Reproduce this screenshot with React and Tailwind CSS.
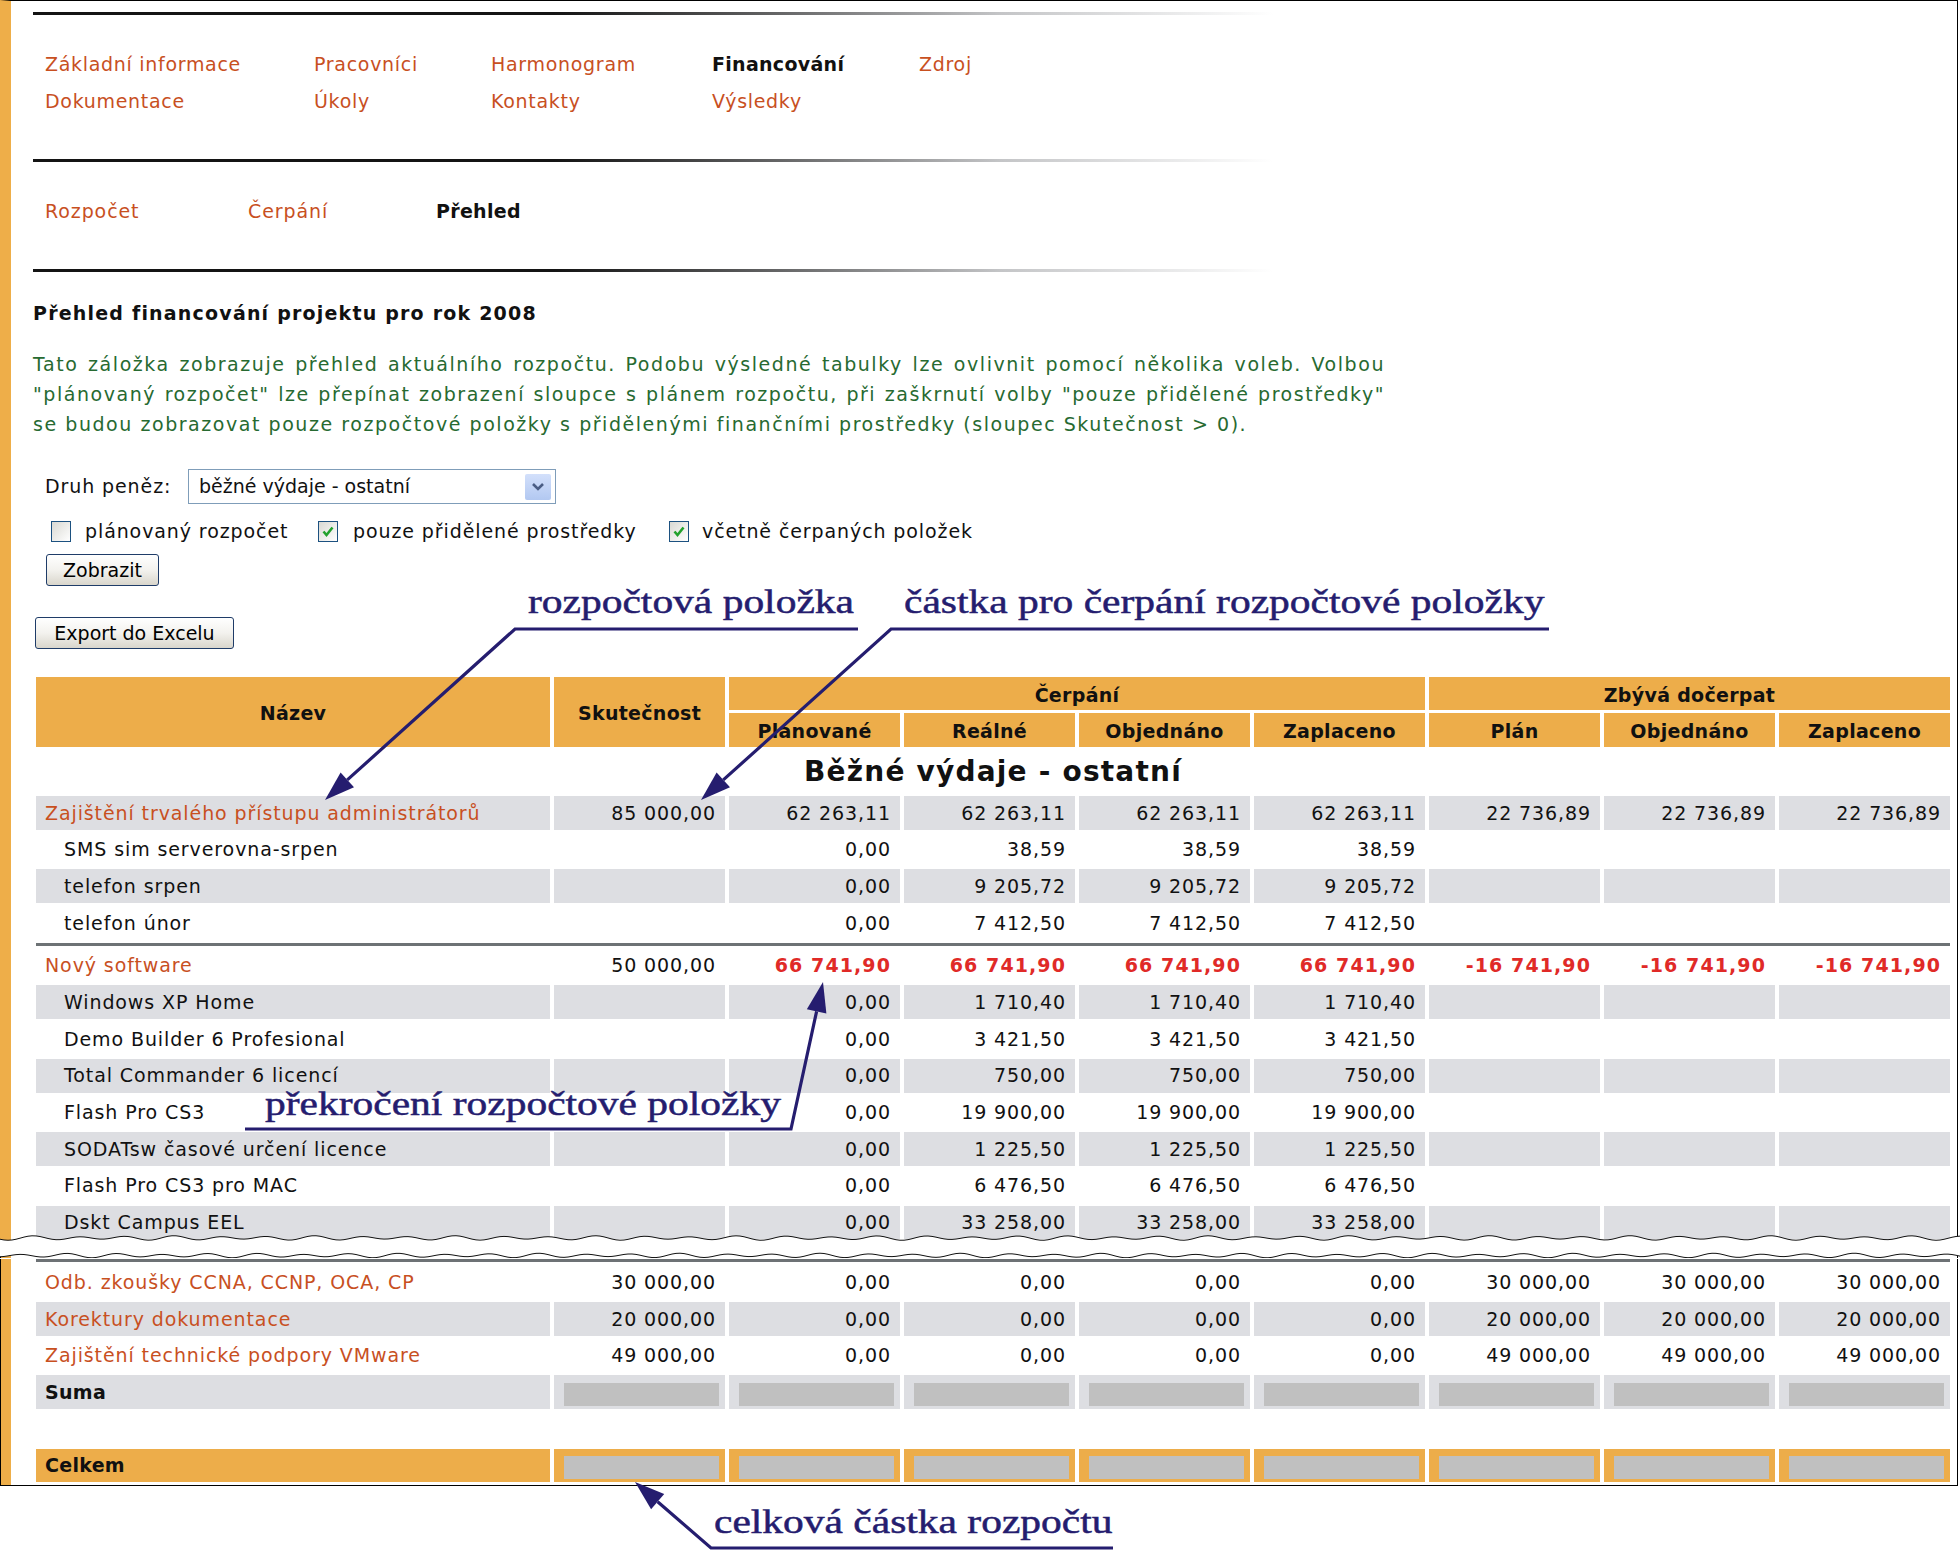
import React from 'react';

const LINK = 'text-[#c8501f]';
const GRAY = 'bg-[#dddee2]';
const ORANGE = 'bg-[#edad4a]';

const NAV = [
  ['Základní informace', 'Pracovníci', 'Harmonogram', 'Financování', 'Zdroj'],
  ['Dokumentace', 'Úkoly', 'Kontakty', 'Výsledky'],
];

const TOP_ROWS = [
  { name: 'Zajištění trvalého přístupu administrátorů', parent: true, gray: true, vals: ['85 000,00', '62 263,11', '62 263,11', '62 263,11', '62 263,11', '22 736,89', '22 736,89', '22 736,89'] },
  { name: 'SMS sim serverovna-srpen', vals: ['', '0,00', '38,59', '38,59', '38,59', '', '', ''] },
  { name: 'telefon srpen', gray: true, vals: ['', '0,00', '9 205,72', '9 205,72', '9 205,72', '', '', ''] },
  { name: 'telefon únor', vals: ['', '0,00', '7 412,50', '7 412,50', '7 412,50', '', '', ''] },
  { sep: true },
  { name: 'Nový software', parent: true, over: true, vals: ['50 000,00', '66 741,90', '66 741,90', '66 741,90', '66 741,90', '-16 741,90', '-16 741,90', '-16 741,90'] },
  { name: 'Windows XP Home', gray: true, vals: ['', '0,00', '1 710,40', '1 710,40', '1 710,40', '', '', ''] },
  { name: 'Demo Builder 6 Profesional', vals: ['', '0,00', '3 421,50', '3 421,50', '3 421,50', '', '', ''] },
  { name: 'Total Commander 6 licencí', gray: true, vals: ['', '0,00', '750,00', '750,00', '750,00', '', '', ''] },
  { name: 'Flash Pro CS3', vals: ['', '0,00', '19 900,00', '19 900,00', '19 900,00', '', '', ''] },
  { name: 'SODATsw časové určení licence', gray: true, vals: ['', '0,00', '1 225,50', '1 225,50', '1 225,50', '', '', ''] },
  { name: 'Flash Pro CS3 pro MAC', vals: ['', '0,00', '6 476,50', '6 476,50', '6 476,50', '', '', ''] },
  { name: 'Dskt Campus EEL', gray: true, vals: ['', '0,00', '33 258,00', '33 258,00', '33 258,00', '', '', ''] },
];

const LOW_ROWS = [
  { name: 'Odb. zkoušky CCNA, CCNP, OCA, CP', parent: true, vals: ['30 000,00', '0,00', '0,00', '0,00', '0,00', '30 000,00', '30 000,00', '30 000,00'] },
  { name: 'Korektury dokumentace', parent: true, gray: true, vals: ['20 000,00', '0,00', '0,00', '0,00', '0,00', '20 000,00', '20 000,00', '20 000,00'] },
  { name: 'Zajištění technické podpory VMware', parent: true, vals: ['49 000,00', '0,00', '0,00', '0,00', '0,00', '49 000,00', '49 000,00', '49 000,00'] },
];

function Cols() {
  return (
    <colgroup>
      <col className="w-[514px]" />
      {Array.from({ length: 8 }).map((_, i) => (
        <col key={i} className="w-[171px]" />
      ))}
    </colgroup>
  );
}

function GradLine({ className = '' }) {
  return (
    <div className={`ml-[21px] h-[3px] w-[1240px] bg-linear-to-r from-[#141414] from-42% via-[#c4c5c7] via-78% to-white ${className}`} />
  );
}

function DataRow({ row }) {
  if (row.sep) {
    return (
      <tr>
        <td colSpan={9} className="h-[3px] p-0 bg-[#6d7275]" />
      </tr>
    );
  }
  const bg = row.gray ? GRAY : '';
  return (
    <tr>
      <td className={`h-[33.7px] p-0 whitespace-nowrap ${bg} ${row.parent ? `pl-[9px] ${LINK}` : 'pl-[28px] text-[#111]'}`}>
        {row.name}
      </td>
      {row.vals.map((v, i) => (
        <td
          key={i}
          className={`h-[33.7px] p-0 pr-[9px] text-right whitespace-nowrap ${bg} ${row.over && i > 0 ? 'font-bold tracking-[1.1px] text-[#e02a27]' : 'text-[#111]'}`}
        >
          {v}
        </td>
      ))}
    </tr>
  );
}

function Check({ checked }) {
  return (
    <span className="flex h-[21px] w-[20px] shrink-0 items-center justify-center border border-[#1c5180] bg-linear-to-br from-[#d9d9d3] to-white">
      {checked && (
        <svg width="14" height="14" viewBox="0 0 14 14">
          <path d="M2.5 6.5 L5.5 10 L11.5 2.5" fill="none" stroke="#22a12c" strokeWidth="2.6" />
        </svg>
      )}
    </span>
  );
}

function XpButton({ children, className = '' }) {
  return (
    <button className={`flex h-[32px] items-center justify-center rounded-[3px] border border-[#1f3c68] bg-linear-to-b from-white via-[#f3f2ee] to-[#d9d6cc] text-[19px] tracking-normal text-black ${className}`}>
      {children}
    </button>
  );
}

function wavePoints(base, phase) {
  const pts = [];
  for (let x = 0; x <= 1960; x += 4) {
    const y = base + 1.7 * Math.sin((x / 47) * 2 * Math.PI + phase) + 0.6 * Math.sin(x / 11 + phase * 3);
    pts.push([x, y]);
  }
  return pts;
}

function Tear() {
  const up = wavePoints(3, 0.4);
  const low = wavePoints(20.5, 1.9);
  const toD = (pts) => pts.map((p, i) => `${i ? 'L' : 'M'}${p[0]} ${p[1].toFixed(2)}`).join(' ');
  const fill = toD(up) + ' ' + [...low].reverse().map((p) => `L${p[0]} ${p[1].toFixed(2)}`).join(' ') + ' Z';
  return (
    <svg className="relative z-10 -mt-[7px] block" width="1960" height="23" viewBox="0 0 1960 23">
      <rect x="1" y="16" width="10" height="7" fill="#eeae49" />
      <rect x="0" y="16" width="1" height="7" fill="#000" />
      <rect x="1957" y="16" width="1" height="7" fill="#000" />
      <path d={fill} fill="#fff" />
      <path d={toD(up)} fill="none" stroke="#111" strokeWidth="1" />
      <path d={toD(low)} fill="none" stroke="#111" strokeWidth="1" />
    </svg>
  );
}

const ARROWS = [
  { pts: [[858, 629], [515, 629]], tip: [325, 800] },
  { pts: [[1549, 629], [891, 629]], tip: [701, 800] },
  { pts: [[245, 1129], [791, 1129]], tip: [823, 982] },
  { pts: [[1113, 1548], [711, 1548]], tip: [635, 1482] },
];

function Arrows() {
  return (
    <svg className="pointer-events-none absolute left-0 top-0 z-20" width="1960" height="1551" viewBox="0 0 1960 1551">
      {ARROWS.map((a, i) => {
        const p = a.pts[a.pts.length - 1];
        const dx = a.tip[0] - p[0];
        const dy = a.tip[1] - p[1];
        const len = Math.hypot(dx, dy);
        const ux = dx / len;
        const uy = dy / len;
        const bx = a.tip[0] - ux * 30;
        const by = a.tip[1] - uy * 30;
        const nx = -uy * 10;
        const ny = ux * 10;
        const line = [...a.pts, [bx, by]].map((q) => q.join(',')).join(' ');
        return (
          <g key={i}>
            <polyline points={line} fill="none" stroke="#251d6f" strokeWidth="3.2" />
            <polygon points={`${a.tip[0]},${a.tip[1]} ${bx + nx},${by + ny} ${bx - nx},${by - ny}`} fill="#251d6f" />
          </g>
        );
      })}
    </svg>
  );
}

function Note({ className, children }) {
  return (
    <div className={`absolute z-20 origin-left scale-x-122 whitespace-nowrap font-['Liberation_Serif',serif] text-[34px] leading-[34px] tracking-normal text-[#251d6f] [-webkit-text-stroke:0.5px_#251d6f] ${className}`}>
      {children}
    </div>
  );
}

export default function App() {
  return (
    <div className="relative h-[1551px] w-[1960px] overflow-hidden bg-white font-['DejaVu_Sans',sans-serif] text-[19px] tracking-[0.9px] text-[#111]">
      {/* horní část */}
      <div className="w-[1958px] border-t border-r border-black border-l-[11px] border-l-[#eeae49]">
        <GradLine className="mt-[11px] ml-[22px]" />

        <div className="ml-[34px] mt-[31px] grid grid-cols-[269px_177px_221px_207px_120px] auto-rows-[37px] items-center">
          {NAV.flat().map((n) =>
            n === 'Financování' ? (
              <span key={n} className="font-bold tracking-[0.3px] text-[#111]">{n}</span>
            ) : (
              <span key={n} className={`tracking-[0.7px] ${LINK}`}>{n}</span>
            )
          )}
        </div>

        <GradLine className="mt-[39px] ml-[22px]" />

        <div className="ml-[34px] mt-[31px] flex h-[37px] items-center">
          <span className={`w-[203px] ${LINK}`}>Rozpočet</span>
          <span className={`w-[188px] ${LINK}`}>Čerpání</span>
          <span className="font-bold tracking-[0.3px]">Přehled</span>
        </div>

        <GradLine className="mt-[39px] ml-[22px]" />

        <h1 className="ml-[22px] mt-[26px] h-[30px] font-bold leading-[30px] tracking-[1.2px]">
          Přehled financování projektu pro rok 2008
        </h1>

        <div className="ml-[22px] mt-[21px] whitespace-nowrap leading-[30px] tracking-[1.55px] text-[#276a31]">
          <p className="w-[1352px] text-justify [text-align-last:justify]">Tato záložka zobrazuje přehled aktuálního rozpočtu. Podobu výsledné tabulky lze ovlivnit pomocí několika voleb. Volbou</p>
          <p className="w-[1352px] text-justify [text-align-last:justify]">"plánovaný rozpočet" lze přepínat zobrazení sloupce s plánem rozpočtu, při zaškrnutí volby "pouze přidělené prostředky"</p>
          <p>se budou zobrazovat pouze rozpočtové položky s přidělenými finančními prostředky (sloupec Skutečnost &gt; 0).</p>
        </div>

        <div className="ml-[34px] mt-[30px] flex h-[35px] items-center">
          <span className="w-[143px]">Druh peněz:</span>
          <div className="flex h-[35px] w-[368px] items-center justify-between border border-[#7f9db9] pl-[10px] pr-[4px] tracking-normal">
            <span>běžné výdaje - ostatní</span>
            <span className="flex h-[26px] w-[26px] items-center justify-center rounded-[2px] bg-linear-to-b from-[#d3e0fb] to-[#b2c8f1]">
              <svg width="14" height="10" viewBox="0 0 14 10">
                <path d="M2 2 L7 7 L12 2" fill="none" stroke="#4a5d84" strokeWidth="2.6" />
              </svg>
            </span>
          </div>
        </div>

        <div className="ml-[40px] mt-[11px] flex h-[33px] items-center">
          <label className="flex w-[267px] items-center gap-[14px]">
            <Check />
            <span>plánovaný rozpočet</span>
          </label>
          <label className="flex w-[351px] items-center gap-[15px]">
            <Check checked />
            <span>pouze přidělené prostředky</span>
          </label>
          <label className="flex items-center gap-[13px]">
            <Check checked />
            <span>včetně čerpaných položek</span>
          </label>
        </div>

        <XpButton className="ml-[35px] mt-[6px] w-[113px]">Zobrazit</XpButton>
        <XpButton className="ml-[24px] mt-[31px] w-[199px]">Export do Excelu</XpButton>

        <table className="ml-[21px] mt-[25px] w-[1922px] table-fixed border-separate border-spacing-x-[4px] border-spacing-y-[3px]">
          <Cols />
          <thead>
            <tr>
              <th rowSpan={2} className={`p-0 pt-[3px] font-bold tracking-[0.3px] ${ORANGE}`}>Název</th>
              <th rowSpan={2} className={`p-0 pt-[3px] font-bold tracking-[0.3px] ${ORANGE}`}>Skutečnost</th>
              <th colSpan={4} className={`h-[33px] p-0 pt-[3px] font-bold tracking-[0.3px] ${ORANGE}`}>Čerpání</th>
              <th colSpan={3} className={`h-[33px] p-0 pt-[3px] font-bold tracking-[0.3px] ${ORANGE}`}>Zbývá dočerpat</th>
            </tr>
            <tr>
              {['Plánované', 'Reálné', 'Objednáno', 'Zaplaceno', 'Plán', 'Objednáno', 'Zaplaceno'].map((h, i) => (
                <th key={i} className={`h-[34px] p-0 pt-[3px] font-bold tracking-[0.3px] ${ORANGE}`}>{h}</th>
              ))}
            </tr>
          </thead>
          <tbody>
            <tr>
              <td colSpan={9} className="h-[39px] p-0 pt-[1px] text-center text-[28px] font-bold tracking-[1.2px]">
                Běžné výdaje - ostatní
              </td>
            </tr>
            {TOP_ROWS.map((r, i) => (
              <DataRow key={i} row={r} />
            ))}
          </tbody>
        </table>
      </div>

      <Tear />

      {/* dolní část */}
      <div className="w-[1958px] border-r border-b border-l border-black">
        <div className="border-l-[10px] border-[#eeae49]">
          <div className="ml-[25px] mt-[1px] h-[3px] w-[1914px] bg-[#6d7275]" />
          <table className="ml-[21px] w-[1922px] table-fixed border-separate border-spacing-x-[4px] border-spacing-y-[3px]">
            <Cols />
            <tbody>
              {LOW_ROWS.map((r, i) => (
                <DataRow key={i} row={r} />
              ))}
              <tr>
                <td className={`h-[33.7px] p-0 pl-[9px] font-bold tracking-[0.3px] ${GRAY}`}>Suma</td>
                {Array.from({ length: 8 }).map((_, i) => (
                  <td key={i} className={`h-[33.7px] p-0 align-top ${GRAY}`}>
                    <div className="ml-[10px] mt-[8px] h-[23px] w-[155px] bg-[#c0c0c0]" />
                  </td>
                ))}
              </tr>
              <tr>
                <td colSpan={9} className="h-[33.7px] p-0" />
              </tr>
              <tr>
                <td className={`h-[33.7px] p-0 pl-[9px] font-bold tracking-[0.3px] ${ORANGE}`}>Celkem</td>
                {Array.from({ length: 8 }).map((_, i) => (
                  <td key={i} className={`h-[33.7px] p-0 align-top ${ORANGE}`}>
                    <div className="ml-[10px] mt-[7px] h-[23px] w-[155px] bg-[#c0c0c0]" />
                  </td>
                ))}
              </tr>
            </tbody>
          </table>
        </div>
      </div>

      {/* popisky */}
      <Arrows />
      <Note className="left-[528px] top-[585px]">rozpočtová položka</Note>
      <Note className="left-[904px] top-[585px]">částka pro čerpání rozpočtové položky</Note>
      <Note className="left-[265px] top-[1087px]">překročení rozpočtové položky</Note>
      <Note className="left-[714px] top-[1505px]">celková částka rozpočtu</Note>
    </div>
  );
}
